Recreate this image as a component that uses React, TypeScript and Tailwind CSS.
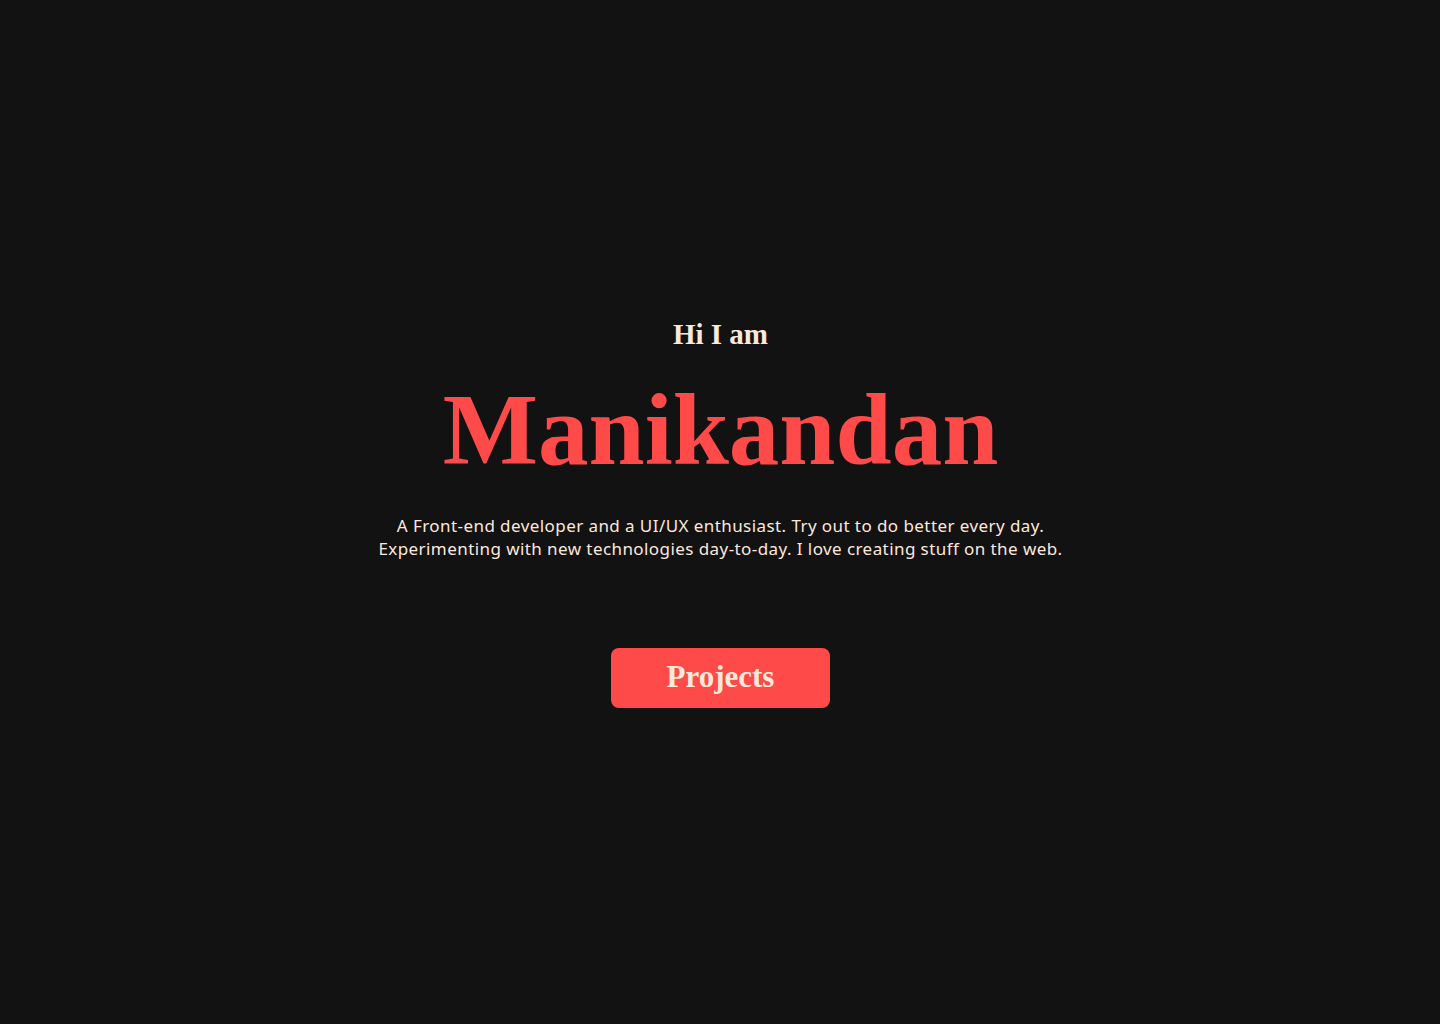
export default function App() {
  return (
    <div className="min-h-screen w-full bg-[#121212] flex flex-col items-center justify-center">
      <div className="flex flex-col items-center pl-px">
        <h2 className="text-[29px] leading-[36px] font-bold text-[#fde8dc] [font-family:'Liberation_Serif',serif]">
          Hi I am
        </h2>
        <h1 className="mt-[28px] text-[101px] leading-[100px] font-bold text-[#ff4a4a] [font-family:'Liberation_Serif',serif]">
          Manikandan
        </h1>
        <p className="mt-[34px] text-center text-[17px] leading-[23px] tracking-[0.025em] text-[#fde8dc] [font-family:'Noto_Sans',sans-serif]">
          A Front-end developer and a UI/UX enthusiast. Try out to do better every day.
          <br />
          Experimenting with new technologies day-to-day. I love creating stuff on the web.
        </p>
        <button className="mt-[88px] w-[219px] h-[60px] pb-[2px] rounded-[8px] bg-[#ff4a4a] text-[#fde8dc] text-[31px] font-bold [font-family:'Liberation_Serif',serif] flex items-center justify-center">
          Projects
        </button>
      </div>
    </div>
  );
}
